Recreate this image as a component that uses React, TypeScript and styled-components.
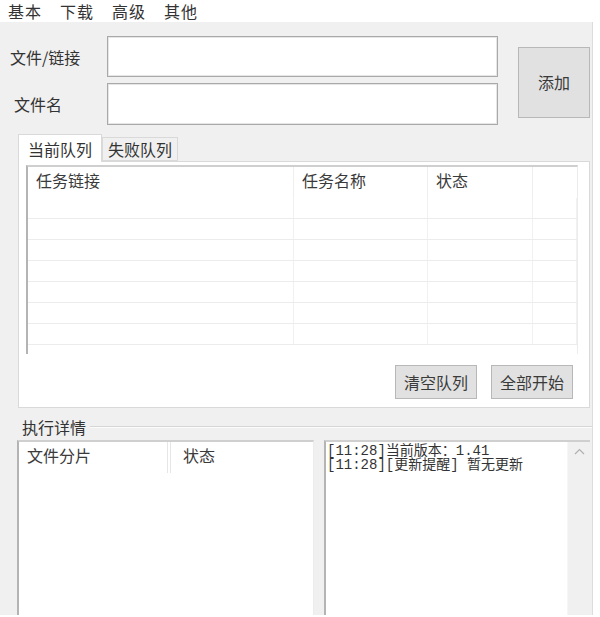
import React from 'react';
import styled, { createGlobalStyle } from 'styled-components';

const GlobalStyle = createGlobalStyle`
    html, body {
        margin:0;
        padding:0;
        background:#ffffff;
    }
    body {
        font-family:"Noto Sans CJK SC", "Liberation Sans", sans-serif;
        color:#383838;
        font-size:16px;
    }
`;

const Page = styled.div`
    width:600px;
    height:617px;
    overflow:hidden;
    background:#ffffff;
`;

const MenuBar = styled.div`
    display:flex;
    height:22px;
    align-items:center;
    padding-left:8px;
    gap:18px;
    background:#ffffff;
`;

const MenuItem = styled.span`
    font-size:16px;
    line-height:22px;
    letter-spacing:1px;
    color:#333;
`;

const Window = styled.div`
    display:flex;
    flex-direction:column;
    width:592px;
    height:593px;
    background:#f0f0f0;
    border-right:1px solid #dcdcdc;
`;

const Form = styled.div`
    display:grid;
    grid-template-columns:97px 391px 92px;
    grid-template-rows:41px 42px;
    row-gap:6px;
    padding:14px 0 0 10px;
`;

const Label = styled.label<{ $indent?: number }>`
    display:flex;
    align-items:center;
    padding-left:${p => p.$indent ?? 0}px;
    font-size:16px;
    color:#333;
`;

const TextInput = styled.div`
    background:#ffffff;
    border:1px solid #a9a9a9;
    box-shadow:inset 0 0 0 1px #e6e6e6;
`;

const Button = styled.button<{ $w: number; $h: number }>`
    width:${p => p.$w}px;
    height:${p => p.$h}px;
    padding:0;
    background:#e1e1e1;
    border:1px solid #b8b8b8;
    font-family:"Noto Sans CJK SC", "Liberation Sans", sans-serif;
    font-size:16px;
    color:#3a3a3a;
`;

const AddButton = styled(Button)`
    grid-column:3;
    grid-row:1 / span 2;
    align-self:center;
    justify-self:end;
    margin-top:3px;
`;

const TabArea = styled.div`
    display:flex;
    flex-direction:column;
    margin:9px 2px 0 18px;
`;

const TabStrip = styled.div`
    display:flex;
    align-items:flex-end;
    height:27px;
`;

const Tab = styled.div<{ $active?: boolean }>`
    display:flex;
    align-items:center;
    justify-content:center;
    box-sizing:border-box;
    height:${p => (p.$active ? 28 : 24)}px;
    padding:0 ${p => (p.$active ? 9 : 5)}px;
    margin-bottom:${p => (p.$active ? -1 : 0)}px;
    background:${p => (p.$active ? '#ffffff' : '#f0f0f0')};
    border:1px solid #d9d9d9;
    border-bottom:${p => (p.$active ? 'none' : '1px solid #d9d9d9')};
    font-size:16px;
    color:#333;
    position:relative;
    z-index:${p => (p.$active ? 1 : 0)};
`;

const TabPanel = styled.div`
    display:flex;
    flex-direction:column;
    height:247px;
    box-sizing:border-box;
    background:#ffffff;
    border:1px solid #d9d9d9;
    padding:3px 11px 8px 7px;
`;

const ListView = styled.div<{ $h: number }>`
    height:${p => p.$h}px;
    box-sizing:border-box;
    background:#ffffff;
    border-left:2px solid #b4b4b4;
    border-top:2px solid #cfcfcf;
    border-right:1px solid #ececec;
    overflow:hidden;
`;

const Grid = styled.div<{ $cols: string; $h: number; $line?: boolean }>`
    display:grid;
    grid-template-columns:${p => p.$cols};
    height:${p => p.$h}px;
    border-bottom:${p => (p.$line ? '1px solid #ececec' : 'none')};
    box-sizing:border-box;
`;

const HeadCell = styled.div<{ $sep?: string; $pad?: number }>`
    display:flex;
    align-items:center;
    padding:0 0 6px ${p => p.$pad ?? 8}px;
    font-size:16px;
    color:#3a3a3a;
    border-right:${p => p.$sep ?? '1px solid #eeeeee'};
    white-space:nowrap;
`;

const Cell = styled.div`
    border-right:1px solid #f1f1f1;
`;

const Actions = styled.div`
    display:flex;
    justify-content:flex-end;
    gap:14px;
    margin-top:11px;
    padding-right:5px;
`;

const GroupHead = styled.div`
    display:flex;
    align-items:center;
    gap:4px;
    padding:11px 0 0 22px;
    height:16px;
    margin-bottom:5px;
`;

const GroupTitle = styled.span`
    font-size:16px;
    line-height:16px;
    color:#333;
`;

const GroupLine = styled.div`
    flex:1;
    border-top:1px solid #d6d6d6;
    border-bottom:1px solid #fbfbfb;
`;

const Details = styled.div`
    display:flex;
    gap:10px;
    padding:0 2px 0 17px;
    height:175px;
`;

const FileList = styled(ListView)`
    width:297px;
`;

const LogBox = styled.div`
    display:flex;
    width:266px;
    box-sizing:border-box;
    background:#ffffff;
    border-left:2px solid #b4b4b4;
    border-top:2px solid #cfcfcf;
`;

const LogText = styled.div`
    flex:1;
    padding:2px 0 0 1px;
    font-family:"Liberation Mono", "Noto Sans CJK SC", monospace;
    font-size:14px;
    line-height:14px;
    color:#333;
    white-space:pre;
`;

const ScrollBar = styled.div`
    width:23px;
    background:#f0f0f0;
    display:flex;
    justify-content:center;
    padding-top:6px;
    box-sizing:border-box;
    border-left:1px solid #f6f6f6;
`;

const logs = [
    '[11:28]当前版本：1.41',
    '[11:28][更新提醒] 暂无更新',
];

const queueCols = '266px 134px 105px 1fr';

const App: React.FC = () => {
    const rows = Array.from({ length: 7 });

    return (
        <Page>
            <GlobalStyle />
            <MenuBar>
                <MenuItem>基本</MenuItem>
                <MenuItem>下载</MenuItem>
                <MenuItem>高级</MenuItem>
                <MenuItem>其他</MenuItem>
            </MenuBar>
            <Window>
                <Form>
                    <Label>文件/链接</Label>
                    <TextInput />
                    <AddButton $w={72} $h={71}>添加</AddButton>
                    <Label $indent={4}>文件名</Label>
                    <TextInput />
                </Form>

                <TabArea>
                    <TabStrip>
                        <Tab $active>当前队列</Tab>
                        <Tab>失败队列</Tab>
                    </TabStrip>
                    <TabPanel>
                        <ListView $h={190}>
                            <Grid $cols={queueCols} $h={31}>
                                <HeadCell>任务链接</HeadCell>
                                <HeadCell>任务名称</HeadCell>
                                <HeadCell>状态</HeadCell>
                                <HeadCell $sep="none" />
                            </Grid>
                            {rows.map((_, i) => (
                                <Grid key={i} $cols={queueCols} $h={21} $line>
                                    <Cell />
                                    <Cell />
                                    <Cell />
                                    <Cell />
                                </Grid>
                            ))}
                        </ListView>
                        <Actions>
                            <Button $w={82} $h={34}>清空队列</Button>
                            <Button $w={82} $h={34}>全部开始</Button>
                        </Actions>
                    </TabPanel>
                </TabArea>

                <GroupHead>
                    <GroupTitle>执行详情</GroupTitle>
                    <GroupLine />
                </GroupHead>
                <Details>
                    <FileList $h={175}>
                        <Grid $cols="152px 1fr" $h={31}>
                            <HeadCell $sep="4px double #e6e6e6">文件分片</HeadCell>
                            <HeadCell $sep="none" $pad={12}>状态</HeadCell>
                        </Grid>
                    </FileList>
                    <LogBox>
                        <LogText>{logs.join('\n')}</LogText>
                        <ScrollBar>
                            <svg width="11" height="7" viewBox="0 0 11 7">
                                <path d="M1 6 L5.5 1.5 L10 6" fill="none" stroke="#b0b0b0" strokeWidth="1.2" />
                            </svg>
                        </ScrollBar>
                    </LogBox>
                </Details>
            </Window>
        </Page>
    );
};

export default App;
